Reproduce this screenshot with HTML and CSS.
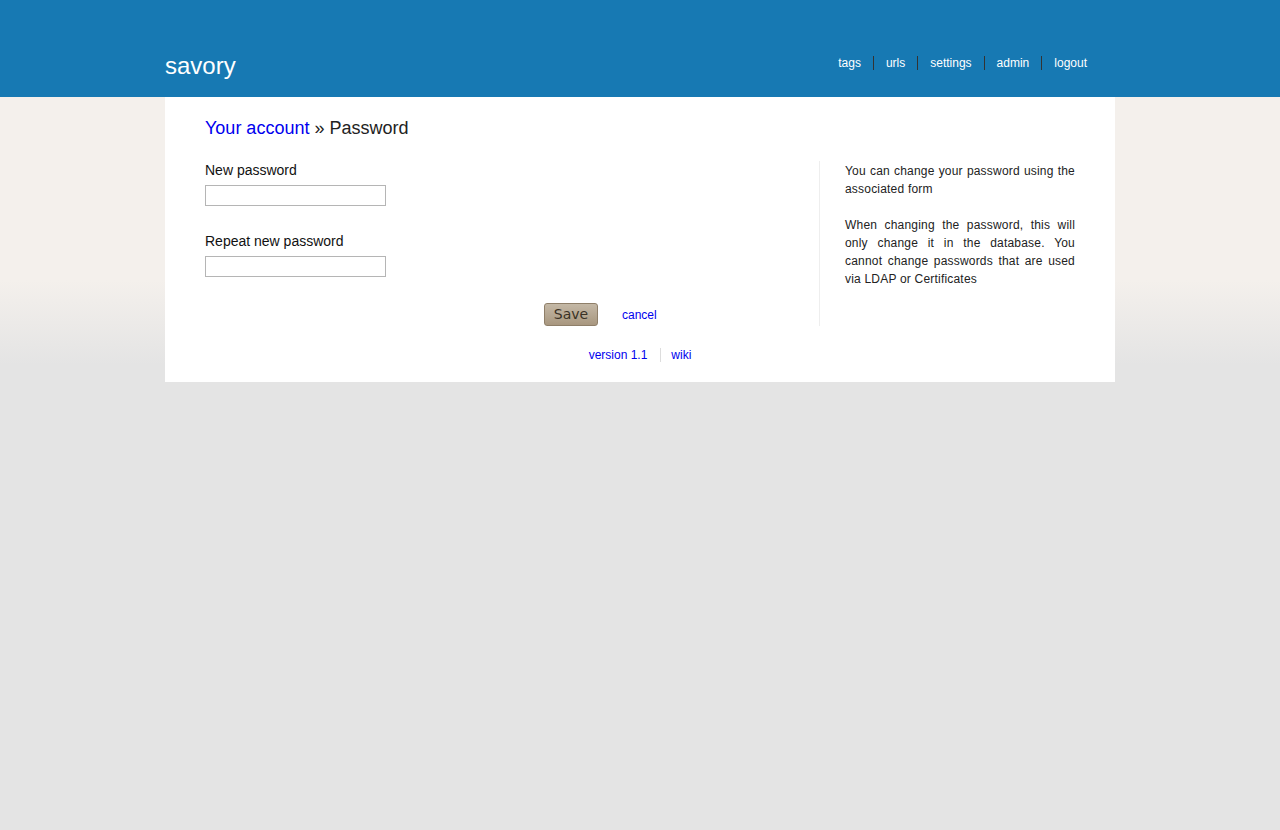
FILE: index.html
```html
<!DOCTYPE html>
<html>
<head>
<meta charset="utf-8">
<title>savory - Password</title>
<link rel="stylesheet" href="styles.css">
</head>
<body>
<header class="top">
  <div class="top-inner">
    <div class="logo">savory</div>
    <ul class="nav">
      <li><a href="#">tags</a></li>
      <li><a href="#">urls</a></li>
      <li><a href="#">settings</a></li>
      <li><a href="#">admin</a></li>
      <li><a href="#">logout</a></li>
    </ul>
  </div>
</header>
<div class="page">
  <h1 class="title"><a href="#">Your account</a> » Password</h1>
  <div class="main">
    <form class="form">
      <label class="label">New password</label>
      <input class="field" type="password">
      <label class="label label-next">Repeat new password</label>
      <input class="field" type="password">
      <div class="actions">
        <button class="btn" type="button">Save</button>
        <a class="cancel" href="#">cancel</a>
      </div>
    </form>
    <aside class="help">
      <p>You can change your password using the associated form</p>
      <p>When changing the password, this will only change it in the database. You cannot change passwords that are used via LDAP or Certificates</p>
    </aside>
  </div>
  <div class="footer">
    <a href="#">version 1.1</a>
    <span class="sep"></span>
    <a href="#">wiki</a>
  </div>
</div>
</body>
</html>
```
FILE: styles.css
```css
html, body {
  margin: 0;
  padding: 0;
}
body {
  font-family: "Liberation Sans", Arial, sans-serif;
  background-color: #e4e4e4;
  background-image: linear-gradient(#f4f0ec 0, #f4f0ec 280px, #e4e4e4 365px);
  background-repeat: no-repeat;
  background-size: 100% 400px;
  min-height: 830px;
}
a { text-decoration: none; }

.top {
  background: #1779b3;
  height: 97px;
}
.top-inner {
  width: 950px;
  margin: 0 auto;
  padding-top: 52px;
  display: flex;
  justify-content: space-between;
  align-items: flex-start;
}
.logo {
  color: #fff;
  font-size: 24px;
  line-height: 28px;
}
.nav {
  list-style: none;
  margin: 4px 0 0;
  padding: 0 16px 0 0;
  display: flex;
}
.nav li {
  padding: 0 12px;
  border-left: 1px solid #333333;
  line-height: 14px;
  font-size: 12px;
}
.nav li:first-child { border-left: none; }
.nav a { color: #fff; }

.page {
  width: 950px;
  margin: 0 auto;
  background: #fff;
  padding: 20px 0 20px;
}
.title {
  margin: 0 0 22px 40px;
  font-size: 18px;
  line-height: 22px;
  font-weight: normal;
  color: #222;
}
.title a { color: #0000ee; }

.main {
  display: flex;
}
.form {
  width: 654px;
  padding-left: 40px;
  box-sizing: border-box;
  display: flex;
  flex-direction: column;
  align-items: flex-start;
  margin: 0;
}
.label {
  font-size: 14px;
  line-height: 18px;
  color: #111;
}
.label-next { margin-top: 26px; }
.field {
  width: 181px;
  height: 21px;
  box-sizing: border-box;
  border: 1px solid #b5b5b5;
  margin: 6px 0 0;
  padding: 0 3px;
  background: #fff;
}
.actions {
  margin-top: 26px;
  padding-left: 339px;
  display: flex;
  align-items: center;
}
.btn {
  width: 54px;
  height: 23px;
  box-sizing: border-box;
  border: 1px solid #8f7f69;
  border-radius: 3px;
  background: linear-gradient(#c4b8a6, #a8977f);
  color: #3a3226;
  font-family: "DejaVu Sans", Verdana, sans-serif;
  font-size: 14px;
  padding: 0;
  line-height: 21px;
}
.cancel {
  margin-left: 24px;
  font-size: 12px;
  color: #0000ee;
}

.help {
  width: 296px;
  box-sizing: border-box;
  border-left: 1px solid #eeeeee;
  padding: 1px 40px 0 25px;
  font-size: 12px;
  letter-spacing: 0.2px;
  line-height: 18px;
  color: #222;
  text-align: justify;
}
.help p { margin: 0 0 18px; }
.help p:last-child { margin-bottom: 0; }

.footer {
  margin-top: 22px;
  display: flex;
  justify-content: center;
  align-items: center;
  font-size: 12px;
  line-height: 14px;
}
.footer a { color: #0000ee; }
.footer .sep {
  width: 1px;
  height: 14px;
  background: #dddddd;
  margin: 0 10px 0 13px;
}
```
